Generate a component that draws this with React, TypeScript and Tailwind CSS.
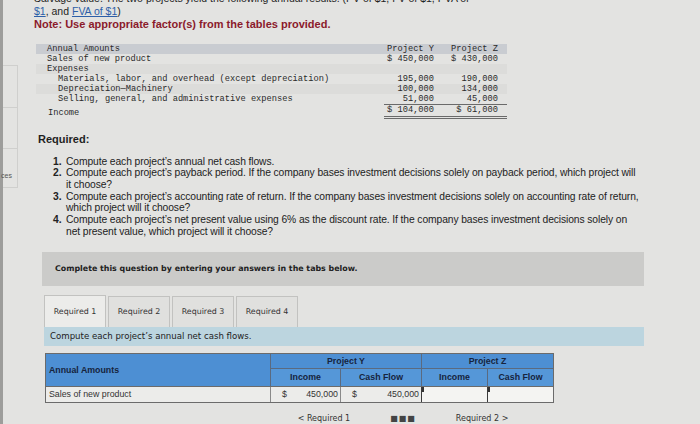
import React from "react";

const amountRows = [
  { label: "Sales of new product", y: "$ 450,000", z: "$ 430,000", indent: false, shade: false },
  { label: "Expenses", y: "", z: "", indent: false, shade: true },
  { label: "Materials, labor, and overhead (except depreciation)", y: "195,000", z: "190,000", indent: true, shade: false },
  { label: "Depreciation\u2014Machinery", y: "100,000", z: "134,000", indent: true, shade: true },
  { label: "Selling, general, and administrative expenses", y: "51,000", z: "45,000", indent: true, shade: false },
];

const questions = [
  { n: "1.", lines: ["Compute each project\u2019s annual net cash flows."] },
  {
    n: "2.",
    lines: [
      "Compute each project\u2019s payback period. If the company bases investment decisions solely on payback period, which project will",
      "it choose?",
    ],
  },
  {
    n: "3.",
    lines: [
      "Compute each project\u2019s accounting rate of return. If the company bases investment decisions solely on accounting rate of return,",
      "which project will it choose?",
    ],
  },
  {
    n: "4.",
    lines: [
      "Compute each project\u2019s net present value using 6% as the discount rate. If the company bases investment decisions solely on",
      "net present value, which project will it choose?",
    ],
  },
];

const tabs = ["Required 1", "Required 2", "Required 3", "Required 4"];

const App = () => {
  return (
    <div className="w-[700px] h-[424px] overflow-hidden bg-[#e3e3e1] flex text-[#1f1f1f] font-['Liberation_Sans',Arial,sans-serif]">
      {/* Left sidebar edge */}
      <div className="w-[18px] shrink-0 border-l-[3px] border-[#9d9d9b] flex flex-col">
        <div className="mt-[65px] h-[123px] border border-l-0 border-[#cfcfcd] flex flex-col">
          <div className="h-[42px] border-b border-[#cfcfcd]" />
          <div className="h-[41px] border-b border-[#cfcfcd]" />
          <div className="flex-1 flex items-end pb-[6px] text-[7px] text-[#555] -ml-[2px]">ces</div>
        </div>
      </div>

      {/* Main column */}
      <div className="flex-1 pl-[16px] flex flex-col">
        {/* Intro text */}
        <div className="-mt-[8px] text-[10.5px] leading-[13px]">
          <div>Salvage value. The two projects yield the following annual results. (PV of $1, FV of $1, PVA of</div>
          <div>
            <span className="text-[#2d5fa8] underline">$1</span>, and{" "}
            <span className="text-[#2d5fa8] underline">FVA of $1</span>)
          </div>
          <div className="font-bold text-[#8b1a2b] text-[11px]">Note: Use appropriate factor(s) from the tables provided.</div>
        </div>

        {/* Annual amounts table */}
        <div className="mt-[13px] ml-[2px] w-[471px] font-['Liberation_Mono',monospace] text-[8.7px] leading-[10px] text-[#2a2a2a]">
          <div className="flex bg-[#c9ccd1] h-[10px]">
            <div className="w-[348px] pl-[11px]">Annual Amounts</div>
            <div className="w-[50px] text-right">Project Y</div>
            <div className="w-[64px] text-right">Project Z</div>
          </div>
          {amountRows.map((r) => (
            <div key={r.label} className={`flex h-[10px] ${r.shade ? "bg-[#dcdcda]" : ""}`}>
              <div className={`w-[348px] ${r.indent ? "pl-[22px]" : "pl-[11px]"}`}>{r.label}</div>
              <div className="w-[50px] text-right">{r.y}</div>
              <div className="w-[64px] text-right">{r.z}</div>
            </div>
          ))}
          <div className="flex h-[15px] items-center">
            <div className="w-[348px] pl-[12px] self-end pb-[1px]">Income</div>
            <div className="w-[123px] h-full flex border-t border-b-[3px] border-double border-[#6a6a6a]">
              <div className="w-[50px] text-right">$ 104,000</div>
              <div className="w-[64px] text-right">$ 61,000</div>
            </div>
          </div>
        </div>

        {/* Required */}
        <div className="mt-[12px] ml-[4px] font-bold text-[11px]">Required:</div>
        <div className="mt-[8px] ml-[19px] text-[10.3px] leading-[11.7px] tracking-[-0.1px] text-[#222]">
          {questions.map((q) => (
            <div key={q.n} className="flex">
              <div className="w-[13px] font-bold shrink-0">{q.n}</div>
              <div>
                {q.lines.map((l) => (
                  <div key={l}>{l}</div>
                ))}
              </div>
            </div>
          ))}
        </div>

        {/* Tabs area */}
        <div className="mt-[15px] ml-[8px] w-[602px] font-['DejaVu_Sans',Verdana,sans-serif]">
          <div className="h-[34px] bg-[#cbcbc9] flex items-center pl-[13px] font-bold text-[7.9px] text-[#222]">
            Complete this question by entering your answers in the tabs below.
          </div>
          <div className="mt-[9px] ml-[2px] flex gap-[2px] items-end">
            {tabs.map((t, i) => (
              <div
                key={t}
                className={`w-[62px] flex items-center justify-center text-[7.9px] text-[#333] border border-[#c2c2c0] border-b-0 ${
                  i === 0 ? "h-[32px] bg-[#ececea]" : "h-[31px] bg-[#e0e0de]"
                }`}
              >
                {t}
              </div>
            ))}
          </div>
          <div className="ml-[2px] h-[19px] bg-[#bcd5df] flex items-center pl-[6px] text-[8.6px] text-[#222]">
            Compute each project&rsquo;s annual net cash flows.
          </div>

          {/* Answer table */}
          <div className="mt-[7px] ml-[3px] w-[509px] border border-[#6b6b6b] text-[8.8px] font-bold text-[#16243d] font-['Liberation_Sans',Arial,sans-serif]">
            <div className="flex h-[32px]">
              <div className="w-[225px] bg-[#4d8fd3] flex items-center pl-[3px] border-r border-[#5a6a80]">Annual Amounts</div>
              <div className="w-[151px] flex flex-col border-r border-[#5a6a80]">
                <div className="h-[15px] bg-[#4d8fd3] flex items-center justify-center border-b border-[#5a6a80]">Project Y</div>
                <div className="flex-1 flex bg-[#5597d8]">
                  <div className="w-[70px] flex items-center justify-center border-r border-[#5a6a80]">Income</div>
                  <div className="flex-1 flex items-center justify-center">Cash Flow</div>
                </div>
              </div>
              <div className="flex-1 flex flex-col">
                <div className="h-[15px] bg-[#4d8fd3] flex items-center justify-center border-b border-[#5a6a80]">Project Z</div>
                <div className="flex-1 flex bg-[#5597d8]">
                  <div className="w-[66px] flex items-center justify-center border-r border-[#5a6a80]">Income</div>
                  <div className="flex-1 flex items-center justify-center">Cash Flow</div>
                </div>
              </div>
            </div>
            <div className="flex h-[16px] border-t border-[#6b6b6b] font-normal text-[#333] bg-[#ececea]">
              <div className="w-[225px] flex items-center pl-[3px] border-r border-[#8a8a8a]">Sales of new product</div>
              <div className="w-[70px] flex items-center justify-between px-[2px] pl-[11px] border-r border-[#8a8a8a]">
                <span>$</span>
                <span>450,000</span>
              </div>
              <div className="w-[81px] flex items-center justify-between px-[2px] pl-[11px] border-r border-[#3a3a3a]">
                <span>$</span>
                <span>450,000</span>
              </div>
              <div className="w-[66px] relative bg-[#f4f4f2] border-r border-[#3a3a3a]">
                <span className="absolute left-0 top-0 w-[2px] h-[5px] bg-[#333]" />
              </div>
              <div className="flex-1 relative bg-[#f4f4f2]">
                <span className="absolute left-0 top-0 w-[2px] h-[5px] bg-[#333]" />
              </div>
            </div>
          </div>

          {/* Navigation at the bottom edge */}
          <div className="mt-[11px] flex items-start justify-center gap-[40px] text-[8px] leading-[10px] text-[#333]">
            <span className="ml-[120px]">&lt; Required 1</span>
            <span className="tracking-[1px] font-bold text-[#444]">&#9632;&#9632;&#9632;</span>
            <span>Required 2 &gt;</span>
          </div>
        </div>
      </div>
    </div>
  );
};

export default App;
